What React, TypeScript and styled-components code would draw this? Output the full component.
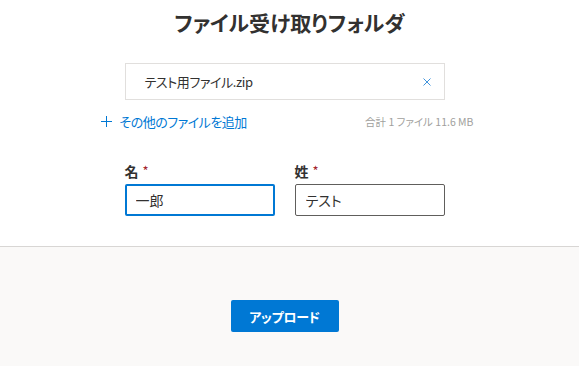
import styled, { createGlobalStyle } from "styled-components";

const GlobalStyle = createGlobalStyle`
  html, body {
    margin: 0;
    padding: 0;
    background: #faf9f8;
  }
  body {
    font-family: "Noto Sans CJK JP", "Noto Sans", sans-serif;
    font-feature-settings: "palt";
    color: #323130;
  }
`;

const Page = styled.div`
  min-height: 366px;
  display: flex;
  flex-direction: column;
`;

const Top = styled.section`
  background: #ffffff;
  padding: 6px 0 30px;
  border-bottom: 1px solid #d8d6d4;
`;

const Title = styled.h1`
  margin: 0;
  text-align: center;
  font-size: 21px;
  line-height: 32px;
  font-weight: 700;
  color: #323130;
`;

const Column = styled.div`
  width: 320px;
  margin-left: calc(50% - 165px);
  display: flex;
  flex-direction: column;
`;

const FileBox = styled.div`
  margin-top: 25px;
  height: 37px;
  box-sizing: border-box;
  border: 1px solid #e1dfdd;
  display: flex;
  align-items: center;
  justify-content: space-between;
  padding: 0 13px 0 19px;
  font-size: 13px;
  letter-spacing: -0.4px;
  color: #323130;
`;

const RemoveButton = styled.button`
  border: none;
  background: none;
  padding: 0;
  display: flex;
  color: #2b88d8;
  cursor: pointer;
`;

const AddRow = styled.div`
  margin: 11px -29px 0 -24px;
  height: 20px;
  display: flex;
  align-items: center;
  justify-content: space-between;
`;

const AddLink = styled.a`
  display: flex;
  align-items: center;
  gap: 8px;
  font-size: 13px;
  letter-spacing: -0.5px;
  color: #0078d4;
  text-decoration: none;
`;

const Summary = styled.span`
  font-size: 10.5px;
  color: #a19f9d;
`;

const Fields = styled.div`
  margin-top: 30px;
  display: grid;
  grid-template-columns: 150px 150px;
  column-gap: 20px;
`;

const Field = styled.label`
  display: flex;
  flex-direction: column;
  gap: 3px;
`;

const LabelText = styled.span`
  font-size: 14px;
  line-height: 20px;
  font-weight: 700;
  color: #323130;
  &::after {
    content: "*";
    color: #a4262c;
    margin-left: 4px;
    font-weight: 400;
    font-size: 13px;
    vertical-align: 1px;
  }
`;

const Input = styled.input<{ $focused?: boolean }>`
  box-sizing: border-box;
  width: 150px;
  height: 32px;
  margin: 0;
  padding: 0 ${(p) => (p.$focused ? "9px" : "10px")};
  font-family: inherit;
  font-feature-settings: "palt";
  font-size: 14px;
  color: #323130;
  background: #ffffff;
  border: ${(p) => (p.$focused ? "2px solid #0078d4" : "1px solid #605e5c")};
  border-radius: 2px;
  outline: none;
`;

const Bottom = styled.section`
  flex: 1;
  background: #faf9f8;
  padding-top: 53px;
`;

const ButtonWrap = styled.div`
  display: flex;
  justify-content: center;
`;

const PrimaryButton = styled.button`
  width: 108px;
  height: 32px;
  border: none;
  border-radius: 2px;
  background: #0078d4;
  color: #ffffff;
  font-family: inherit;
  font-feature-settings: "palt";
  font-size: 13px;
  letter-spacing: -0.3px;
  font-weight: 700;
  cursor: pointer;
`;

function App() {
  return (
    <>
      <GlobalStyle />
      <Page>
        <Top>
          <Title>ファイル受け取りフォルダ</Title>
          <Column>
            <FileBox>
              <span>テスト用ファイル.zip</span>
              <RemoveButton aria-label="削除">
                <svg width="8" height="8" viewBox="0 0 8 8">
                  <path d="M0.5 0.5 L7.5 7.5 M7.5 0.5 L0.5 7.5" stroke="currentColor" strokeWidth="0.9" />
                </svg>
              </RemoveButton>
            </FileBox>
            <AddRow>
              <AddLink href="#">
                <svg width="11" height="11" viewBox="0 0 11 11">
                  <path d="M5.5 0 V11 M0 5.5 H11" stroke="currentColor" strokeWidth="1" />
                </svg>
                その他のファイルを追加
              </AddLink>
              <Summary>合計 1 ファイル 11.6 MB</Summary>
            </AddRow>
            <Fields>
              <Field>
                <LabelText>名</LabelText>
                <Input $focused defaultValue="一郎" />
              </Field>
              <Field>
                <LabelText>姓</LabelText>
                <Input defaultValue="テスト" />
              </Field>
            </Fields>
          </Column>
        </Top>
        <Bottom>
          <Column>
            <ButtonWrap>
              <PrimaryButton>アップロード</PrimaryButton>
            </ButtonWrap>
          </Column>
        </Bottom>
      </Page>
    </>
  );
}

export default App;
